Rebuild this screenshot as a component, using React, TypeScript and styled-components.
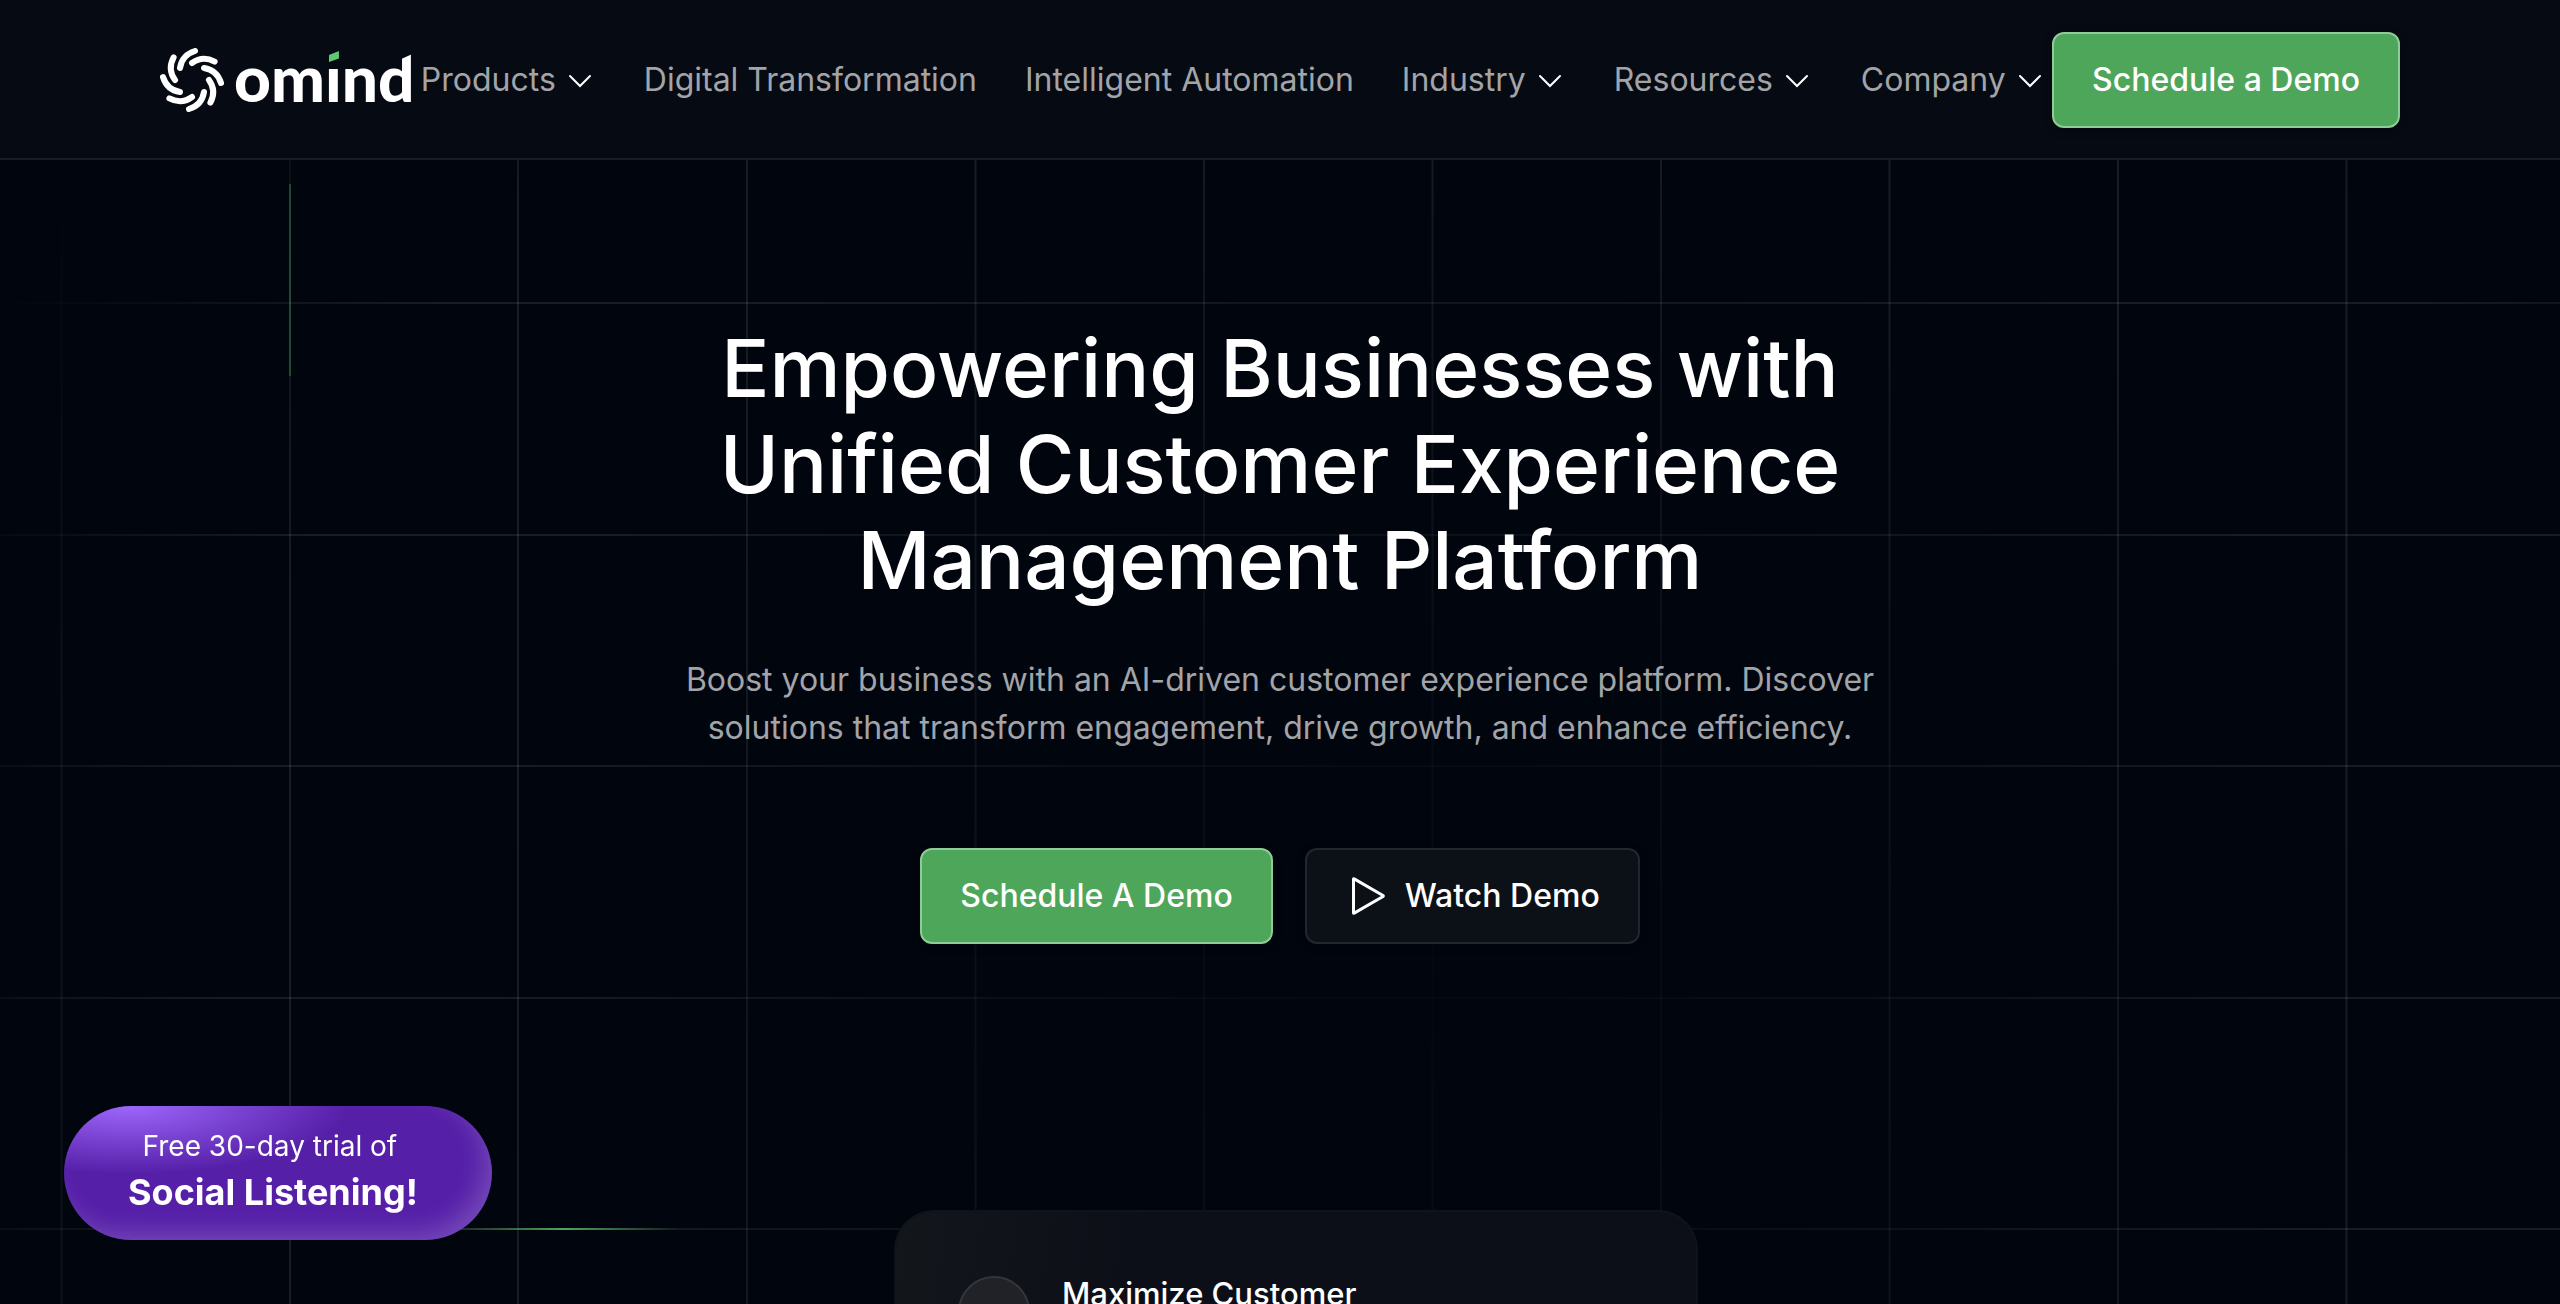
import React from "react";
import styled, { createGlobalStyle } from "styled-components";

const GlobalStyle = createGlobalStyle`
  *, *::before, *::after { box-sizing: border-box; }
  body {
    margin: 0;
    background: #01050e;
    color: #fff;
    font-family: Inter, "Liberation Sans", sans-serif;
    font-size: 32px;
    line-height: 48px;
  }
  a { color: inherit; text-decoration: none; }
  button { font: inherit; color: inherit; cursor: pointer; }
`;

const Page = styled.div`
  position: relative;
  isolation: isolate;
  display: flex;
  flex-direction: column;
  height: 100vh;
  overflow: hidden;
`;

const Backdrop = styled.svg`
  position: absolute;
  inset: 0;
  z-index: -1;
  width: 100%;
  height: 100%;
`;

const Header = styled.header`
  display: flex;
  align-items: center;
  justify-content: space-between;
  padding: 32px 160px 30px;
  background: #060a12;
  border-bottom: 2px solid #191c24;
`;

const Logo = styled.a`
  display: flex;
  align-items: center;
  gap: 10px;
  height: 64px;
`;

const LogoMark = styled.svg`
  width: 64px;
  height: 64px;
`;

const Wordmark = styled.span`
  padding-bottom: 4px;
  font-family: Lato, Inter, sans-serif;
  font-size: 64px;
  line-height: 64px;
  font-weight: 900;
  white-space: nowrap;
`;

const DottedI = styled.span`
  position: relative;
  &::before {
    content: "";
    position: absolute;
    left: 4px;
    top: 12px;
    width: 10px;
    height: 11px;
    background: #5fc777;
    clip-path: polygon(0 36%, 100% 0, 100% 68%, 0 100%);
  }
`;

const SlantedD = styled.span`
  display: inline-block;
  clip-path: polygon(0 0, 50% 24%, 100% 11%, 100% 100%, 0 100%);
`;

const Nav = styled.nav`
  display: flex;
  align-items: center;
  gap: 48px;
  color: #a2a4a8;
  white-space: nowrap;
`;

const MenuButton = styled.button`
  display: flex;
  align-items: center;
  gap: 8px;
  padding: 0;
  border: 0;
  background: none;
`;

const Chevron = styled.svg`
  width: 32px;
  height: 32px;
  color: #fff;
`;

const Action = styled.button<{ $primary?: boolean }>`
  display: flex;
  align-items: center;
  gap: 12px;
  height: 96px;
  padding: 0 38px;
  border: 2px solid ${(p) => (p.$primary ? "#8fcb98" : "#23262d")};
  border-radius: 12px;
  background: ${(p) => (p.$primary ? "#4ea65b" : "#0c1017")};
  font-weight: 500;
  white-space: nowrap;
  box-shadow: 0 2px 8px rgba(0, 0, 0, 0.3);
`;

const PlayIcon = styled.svg`
  width: 48px;
  height: 48px;
`;

const Hero = styled.main`
  display: flex;
  flex-direction: column;
  align-items: center;
  flex: 1;
  padding-top: 160px;
  text-align: center;
`;

const Title = styled.h1`
  max-width: 1240px;
  margin: 0 0 48px;
  font-size: 80px;
  line-height: 96px;
  font-weight: 500;
`;

const Lead = styled.p`
  max-width: 1240px;
  margin: 0 0 96px;
  color: #a2a4a8;
`;

const Actions = styled.div`
  display: flex;
  gap: 32px;
  margin-bottom: 266px;
`;

const Slider = styled.section`
  display: flex;
  flex: 1;
  padding-left: 32px;
`;

const Card = styled.article`
  display: flex;
  align-items: flex-start;
  gap: 32px;
  width: 804px;
  padding: 64px 62px 0;
  border: 2px solid #10131b;
  border-bottom: 0;
  border-radius: 40px 40px 0 0;
  background: linear-gradient(100deg, #13161b, #0c0f17 30%, #0d0f18);
  text-align: left;
`;

const CardIcon = styled.span`
  flex: none;
  width: 72px;
  height: 72px;
  border: 2px solid #33363c;
  border-radius: 50%;
  background: #202228;
`;

const CardTitle = styled.h2`
  margin: 0;
  font-size: 31px;
  line-height: 36px;
  font-weight: 500;
`;

const TrialPill = styled.a`
  position: fixed;
  left: 64px;
  bottom: 64px;
  display: flex;
  flex-direction: column;
  justify-content: center;
  height: 134px;
  padding: 0 74px 6px 64px;
  border-radius: 67px;
  background: radial-gradient(ellipse 220px 68px at 64px 0, #9d66fb, #551fa8);
  box-shadow: inset -12px -12px 24px -4px rgba(255, 255, 255, 0.18);
  text-align: center;
  white-space: nowrap;
`;

const TrialText = styled.span`
  padding-right: 6px;
  font-size: 28px;
  line-height: 44px;
`;

const TrialName = styled.strong`
  font-size: 36px;
  line-height: 48px;
  font-weight: 700;
`;

const columns = [61.5, 290, 518, 747, 975.5, 1204, 1432.5, 1661, 1889.5, 2118, 2346.5];
const rows = [303, 535, 766, 998, 1229];

function GridBackdrop() {
  return (
    <Backdrop viewBox="0 0 2560 1304" preserveAspectRatio="none" aria-hidden="true">
      <defs>
        <radialGradient id="ring" gradientUnits="userSpaceOnUse" cx="1432" cy="1000" r="1600">
          <stop offset="0" stopColor="#fff" stopOpacity="0.01" />
          <stop offset="0.2" stopColor="#fff" stopOpacity="0.03" />
          <stop offset="0.58" stopColor="#fff" stopOpacity="0.09" />
          <stop offset="0.76" stopColor="#fff" stopOpacity="0.09" />
          <stop offset="1" stopColor="#fff" stopOpacity="0" />
        </radialGradient>
        <linearGradient id="beam" gradientUnits="userSpaceOnUse" x1="448" y1="0" x2="680" y2="0">
          <stop offset="0" stopColor="#4ea65b" stopOpacity="0" />
          <stop offset="0.5" stopColor="#4ea65b" />
          <stop offset="1" stopColor="#4ea65b" stopOpacity="0" />
        </linearGradient>
      </defs>
      <g fill="url(#ring)">
        {columns.map((x) => (
          <rect key={x} x={x - 1} y="160" width="2" height="1144" />
        ))}
        {rows.map((y) => (
          <rect key={y} x="0" y={y - 1} width="2560" height="2" />
        ))}
      </g>
      <rect x="289" y="184" width="2" height="192" fill="#4ea65b" opacity="0.35" />
      <rect x="448" y="1228" width="232" height="2" fill="url(#beam)" />
    </Backdrop>
  );
}

function MenuItem({ label }: { label: string }) {
  return (
    <MenuButton type="button" aria-haspopup="true">
      {label}
      <Chevron viewBox="8 8 32 32" fill="none" stroke="currentColor" strokeWidth="2" aria-hidden="true">
        <path d="M14 20l10 10 10-10" strokeLinecap="round" />
      </Chevron>
    </MenuButton>
  );
}

const blades = [0, 45, 90, 135, 180, 225, 270, 315];

export default function App() {
  return (
    <>
      <GlobalStyle />
      <Page>
        <GridBackdrop />
        <Header>
          <Logo href="#" aria-label="omind">
            <LogoMark viewBox="-32 -32 64 64" fill="none" stroke="#fff" strokeWidth="6" aria-hidden="true">
              {blades.map((angle) => (
                <path
                  key={angle}
                  d="M-12 -12Q-10 -25 3 -29"
                  strokeLinecap="round"
                  transform={`rotate(${angle})`}
                />
              ))}
            </LogoMark>
            <Wordmark>
              om<DottedI>ı</DottedI>n<SlantedD>d</SlantedD>
            </Wordmark>
          </Logo>
          <Nav aria-label="Main">
            <MenuItem label="Products" />
            <a href="#digital">Digital Transformation</a>
            <a href="#automation">Intelligent Automation</a>
            <MenuItem label="Industry" />
            <MenuItem label="Resources" />
            <MenuItem label="Company" />
          </Nav>
          <Action type="button" $primary>
            Schedule a Demo
          </Action>
        </Header>
        <Hero>
          <Title>Empowering Businesses with Unified Customer Experience Management Platform</Title>
          <Lead>
            Boost your business with an AI-driven customer experience platform. Discover solutions
            that transform engagement, drive growth, and enhance efficiency.
          </Lead>
          <Actions>
            <Action type="button" $primary>
              Schedule A Demo
            </Action>
            <Action type="button">
              <PlayIcon viewBox="0 0 48 48" fill="none" stroke="currentColor" strokeWidth="3" aria-hidden="true">
                <path d="M8.500 7.200v33.600q0 .8 .7 .3L38 24.500q.6-.5 0-1L9.200 6.900q-.7-.5-.7 .3z" strokeLinejoin="round" />
              </PlayIcon>
              Watch Demo
            </Action>
          </Actions>
          <Slider aria-label="Highlights">
            <Card>
              <CardIcon aria-hidden="true" />
              <CardTitle>Maximize Customer</CardTitle>
            </Card>
          </Slider>
        </Hero>
        <TrialPill href="#trial">
          <TrialText>Free 30-day trial of</TrialText>
          <TrialName>Social Listening!</TrialName>
        </TrialPill>
      </Page>
    </>
  );
}
